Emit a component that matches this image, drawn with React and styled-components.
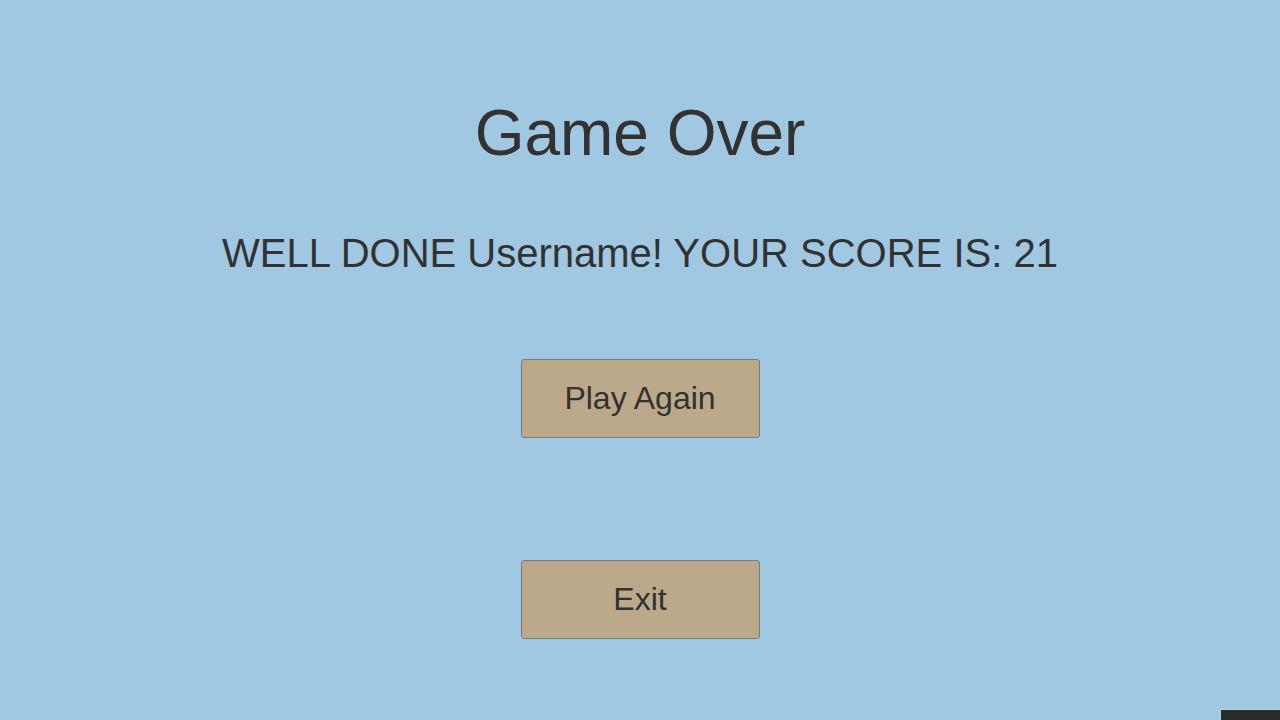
import React from 'react'
import styled, { createGlobalStyle } from 'styled-components'

const GlobalStyle = createGlobalStyle`
    html, body {
        margin: 0;
        padding: 0;
        height: 100%;
    }

    body {
        background: #a1c8e2;
        font-family: "Liberation Sans", Arial, sans-serif;
        color: #323232;
        overflow: hidden;
    }
`;

const StyledScreen = styled.div`
    position: relative;
    width: 1280px;
    height: 720px;
    display: flex;
    flex-direction: column;
    align-items: center;
    padding-top: 101px;
    box-sizing: border-box;
`;

const StyledTitle = styled.h1`
    margin: 0;
    font-size: 64px;
    font-weight: 400;
    line-height: 64px;
`;

const StyledScore = styled.p`
    margin: 68px 0 0;
    font-size: 40px;
    line-height: 40px;
`;

const StyledButtons = styled.div`
    display: flex;
    flex-direction: column;
    gap: 122px;
    margin-top: 86px;
`;

const StyledButton = styled.button`
    width: 239px;
    height: 79px;
    margin: 0;
    padding: 0;
    background: #bca98a;
    border: 1px solid #7c7c7a;
    border-radius: 3px;
    font-family: inherit;
    font-size: 32px;
    color: #323232;
    cursor: pointer;

    &:hover {
        background: #c6b596;
    }
`;

// dark strip sitting over the bottom right corner
const StyledCorner = styled.div`
    position: absolute;
    right: 0;
    bottom: 0;
    width: 59px;
    height: 10px;
    background: #2b2b2b;
    border-top: 1px solid #b4d2e6;
    border-left: 1px solid #b4d2e6;
`;

const GameOver = ({
    username = 'Username',
    score = 21
}) => {
    return (
        <StyledScreen>
            <StyledTitle>Game Over</StyledTitle>
            <StyledScore>
                WELL DONE {username}! YOUR SCORE IS: {score}
            </StyledScore>
            <StyledButtons>
                <StyledButton>Play Again</StyledButton>
                <StyledButton>Exit</StyledButton>
            </StyledButtons>
            <StyledCorner />
        </StyledScreen>
    )
};

const App = () => (
    <>
        <GlobalStyle />
        <GameOver />
    </>
);

export default App;
